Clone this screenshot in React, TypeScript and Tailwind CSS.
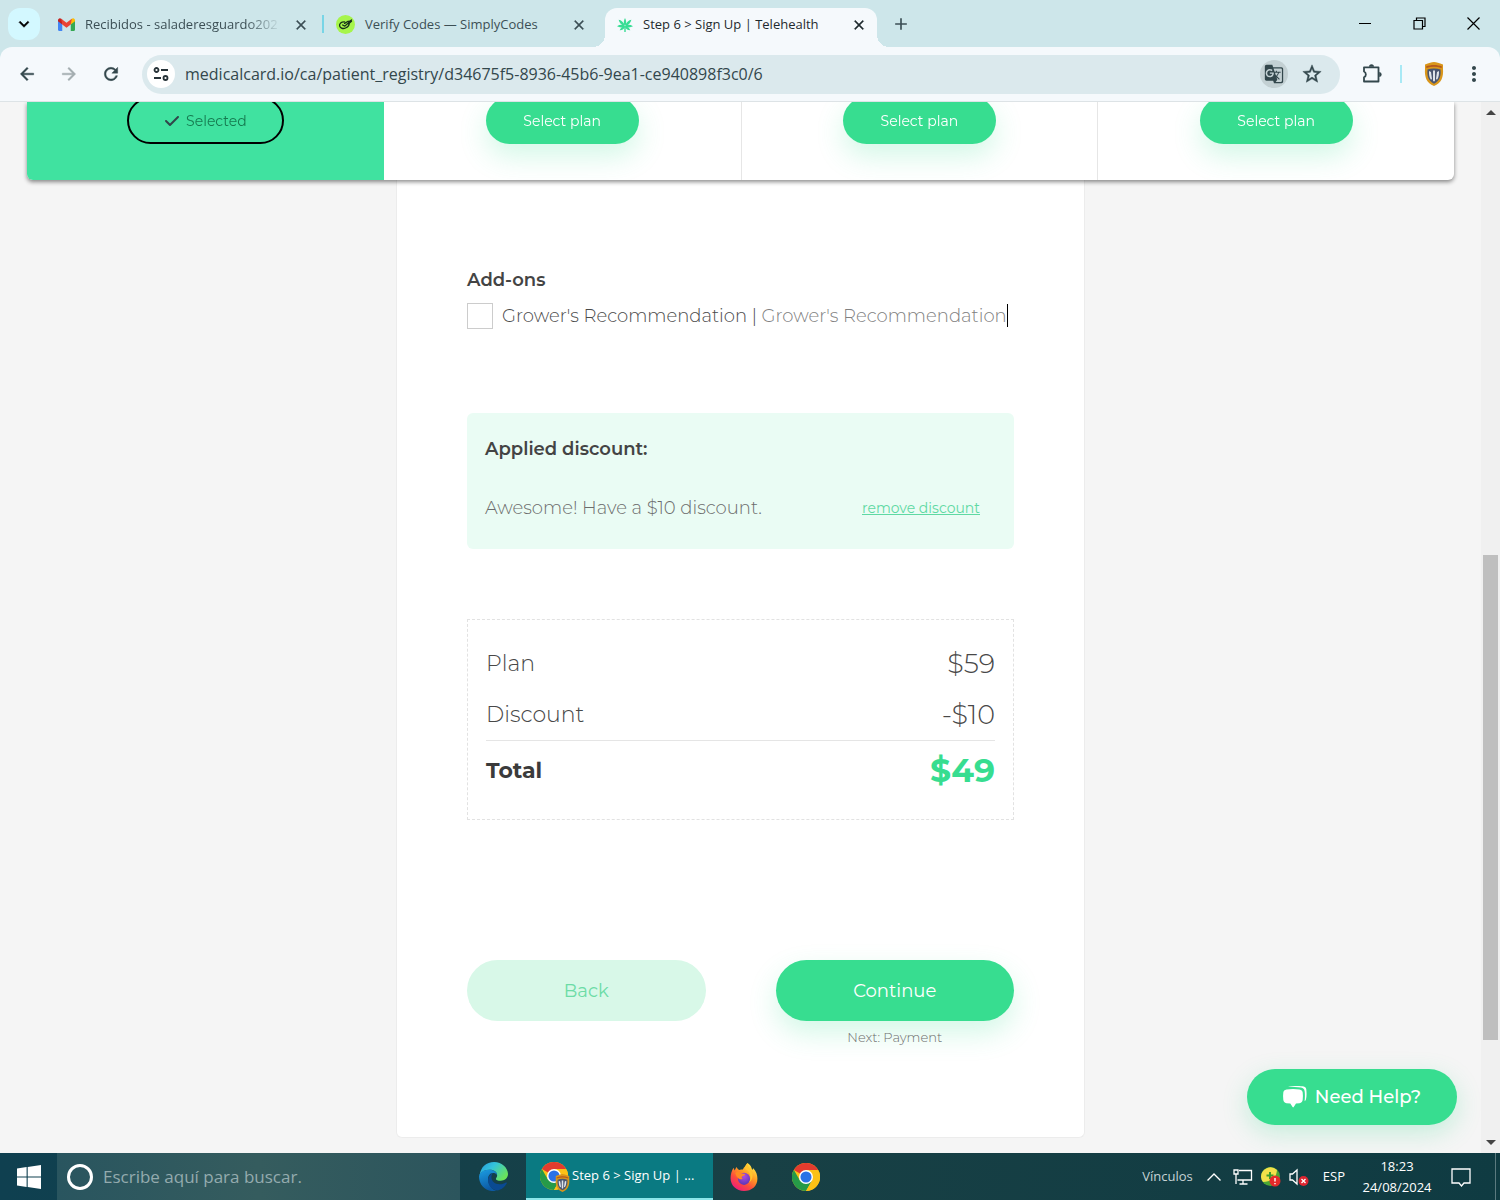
import React from "react";
import { FaCheck } from "react-icons/fa6";
import {
  MdArrowBack,
  MdArrowForward,
  MdClose,
  MdAdd,
  MdGTranslate,
  MdMoreVert,
  MdRefresh,
  MdStarBorder,
  MdKeyboardArrowDown,
} from "react-icons/md";

const GmailIcon = () => (
  <svg className="h-[13px] w-[17px] shrink-0" viewBox="0 0 16 12" aria-hidden="true">
    <path d="M0 2v9a1 1 0 0 0 1 1h3V4z" fill="#4285f4" />
    <path d="M12 4v8h3a1 1 0 0 0 1-1V2z" fill="#34a853" />
    <path d="M0 2a1.8 1.8 0 0 1 3-1.4L4 1.5V6L0 3z" fill="#c5221f" />
    <path d="M16 2a1.8 1.8 0 0 0-3-1.4l-1 .9V6l4-3z" fill="#fbbc04" />
    <path d="M3 .6 8 4.400 13 .6 12 6 8 9 4 6z" fill="#ea4335" />
  </svg>
);

const SimplyCodesIcon = () => (
  <svg className="size-[19px] shrink-0" viewBox="0 0 20 20" aria-hidden="true">
    <circle cx="10" cy="10" r="10" fill="#a6f54b" />
    <g fill="none" stroke="#17301a" strokeWidth="1.4" strokeLinecap="round" strokeLinejoin="round">
      <path d="M9 7.200C5.500 7 3.300 9 3.800 11.500s3.700 3.300 6.200 2.200 4.300-2.900 3.600-5" />
      <path d="M7 10.500l2.300 1.200L16.300 5.200" />
      <path d="M9 8.800l3.300-2 4-.2-3.300 2.800" />
    </g>
  </svg>
);

const LeafIcon = () => (
  <svg className="h-[14px] w-4 shrink-0" viewBox="0 0 16 14" fill="#37dd94" aria-hidden="true">
    <path d="M8 0c1.300 2.200 1.400 4.400.8 7H7.200C6.600 4.400 6.700 2.200 8 0z" />
    <path d="M1.600 1.800C4.300 2.300 6.300 4 7.700 7l-.9.900C4 6.800 2.400 4.800 1.600 1.800zM14.400 1.800C11.700 2.300 9.700 4 8.300 7l.9.900c2.800-1.100 4.400-3.100 5.200-6.100z" />
    <path d="M0 8.300C2.500 6.600 5 6.500 7.800 7.500v1.200C5 9.700 2.500 9.800 0 8.300zM16 8.300c-2.500-1.700-5-1.800-7.800-.8v1.200c2.800 1 5.300 1.100 7.800-.4z" />
    <path d="M2.700 12.200c.9-2.300 2.400-3.500 5-4l.2 1.100c-1.200 2-2.700 3-5.200 2.900zM13.300 12.200c-.9-2.300-2.400-3.500-5-4l-.2 1.100c1.200 2 2.700 3 5.200 2.900z" />
    <path d="M7.300 8h1.400v6H7.300z" />
  </svg>
);

const ExtensionIcon = () => (
  <svg className="size-[22px]" viewBox="0 0 22 22" aria-hidden="true">
    <path
      d="M3 4.300h14.500v14.200H3v-4.200a3.200 3.200 0 0 0 0-5.800z"
      fill="none"
      stroke="currentColor"
      strokeWidth="1.8"
      strokeLinejoin="round"
    />
    <path d="M8 3.700a2.500 2.500 0 0 1 5 0zM18.200 9a2.500 2.500 0 0 1 0 5z" fill="currentColor" />
  </svg>
);

const ShieldIcon = ({ className }: { className: string }) => (
  <svg className={className} viewBox="0 0 20 24" aria-hidden="true">
    <path d="M10 0c2.500.2 5 1.200 9 2.500v4.500c.6 8-1.500 14-9 17C2.500 21 .4 15 1 7V2.500C5 1.200 7.500.2 10 0z" fill="#d9961a" />
    <path d="M2 4.500C7 2.500 13 2.500 18 4.500l-.5 1.500c-5-1.600-10-1.600-15 0z" fill="#b6581d" />
    <path d="M3.500 7.500c4-1.500 9-1.500 13 0 .6 6-.5 11-6.500 14.300C4 18.500 2.900 13.500 3.500 7.500z" fill="#4a5670" />
    <path d="M5 9l2 1 1 7-1 .8C5.300 15.500 4.800 12 5 9zM15 9l-2 1-1 7 1 .8c1.700-2.300 2.200-5.800 2-8.800zM9 8.500h2v10l-1 1.300-1-1.300z" fill="#dfe4ea" />
  </svg>
);

const ChromeIcon = ({ className }: { className: string }) => (
  <svg className={className} viewBox="0 0 48 48" aria-hidden="true">
    <circle cx="24" cy="24" r="24" fill="#fbc116" />
    <path d="M24 24 3.200 12A24 24 0 0 1 44.800 12H24z" fill="#e33b2e" />
    <path d="M3.200 12A24 24 0 0 0 24 48l10.400-18L24 24 13.600 30z" fill="#269a48" />
    <path d="M24 12h20.800A24 24 0 0 1 24 48l10.400-18z" fill="#fbc116" />
    <circle cx="24" cy="24" r="12" fill="#fff" />
    <circle cx="24" cy="24" r="9.500" fill="#2a72e6" />
  </svg>
);

const EdgeIcon = () => (
  <svg className="size-[29px]" viewBox="0 0 48 48" aria-hidden="true">
    <defs>
      <linearGradient id="edgeTop" x1="0" y1="0" x2="1" y2="0.6">
        <stop offset="0" stopColor="#2597dc" />
        <stop offset="0.45" stopColor="#33c3dc" />
        <stop offset="1" stopColor="#6ae35a" />
      </linearGradient>
      <linearGradient id="edgeLow" x1="0" y1="0" x2="0.3" y2="1">
        <stop offset="0" stopColor="#1b9de2" />
        <stop offset="1" stopColor="#0c59a4" />
      </linearGradient>
    </defs>
    <path d="M1 22C3 8 12 0 25 0c13 0 23 10 23 20 0 7-6 11-12 11-5 0-8-1-8-3s2-2 2-6c0-5-5-9-12-9C10 13 4 16 1 22z" fill="url(#edgeTop)" />
    <path d="M0 24c1-7 9-12 18-11 7 .5 12 4 12 9-1-3-4-4-7-4-5 0-8 5-8 10 0 9 6 17 14 20C12 50 0 39 0 24z" fill="url(#edgeLow)" />
    <path d="M23 18c-5 2-8 7-8 12 0 8 6 16 15 17 7-1 13-6 16-12 .5-1-.5-1.500-1.500-1-3 2-6 3-10 3-9 0-14-6-14-12 0-3 1-5 2.500-7z" fill="#0a4a92" />
  </svg>
);

const FirefoxIcon = () => (
  <svg className="size-7" viewBox="0 0 48 48" aria-hidden="true">
    <defs>
      <linearGradient id="foxBody" x1="0.85" y1="0.05" x2="0.25" y2="0.95">
        <stop offset="0" stopColor="#fff04a" />
        <stop offset="0.4" stopColor="#ff9a22" />
        <stop offset="0.7" stopColor="#fb4d3c" />
        <stop offset="1" stopColor="#ee1f78" />
      </linearGradient>
      <radialGradient id="foxGlobe" cx="0.5" cy="0.3" r="0.7">
        <stop offset="0" stopColor="#b04ce0" />
        <stop offset="1" stopColor="#5a36b8" />
      </radialGradient>
    </defs>
    <path d="M30 0c5 3 7 7 8 12l2-3c5 5 7 12 7 18 0 13-10 21-23 21S1 38 1 26C1 19 3 13 6 8l2 5 3-6c1 2 3 4 5 5 2-1 4-1 6-1 2-4 5-6 8-11z" fill="url(#foxBody)" />
    <circle cx="24" cy="27" r="10.5" fill="url(#foxGlobe)" />
    <path d="M9 17c4-3 9-2 11 1l6 1c0 3-6 3-6 6 0 1 1 2 2 2-3 2-7 1-9-2-2-2-3-5-4-8z" fill="#ff8a22" />
    <path d="M26 10c6 3 9 8 9 15 0 4-1 7-3 9 7-4 9-14 4-21-2-3-6-7-6-13-3 3-5 6-4 10z" fill="#ffc52e" />
  </svg>
);

const SiteSettingsIcon = () => (
  <svg className="size-4" viewBox="0 0 16 16" fill="none" stroke="#263238" strokeWidth="1.8" aria-hidden="true">
    <circle cx="3.500" cy="4" r="2" />
    <path d="M8 4h7M1 12h7" />
    <circle cx="12.500" cy="12" r="2" />
  </svg>
);

const WindowsLogo = () => (
  <svg className="size-6" viewBox="0 0 24 24" fill="#fff" aria-hidden="true">
    <path d="M0 3.400 9.600 2v9.400H0zM10.700 1.900 24 0v11.400H10.700zM0 12.500h9.600v9.400L0 20.500zM10.700 12.500H24V24l-13.300-1.900z" />
  </svg>
);

const ChatIcon = () => (
  <svg className="h-[22px] w-6" viewBox="0 0 24 22" fill="#fff" aria-hidden="true">
    <path d="M5 1.100C10-.2 17-.2 20.800.6c1.500.4 2.300 1.300 2.500 3 .4 3.500.4 7-.3 9.700-.3 1-.7 1.500-1.400 1.900.4-3.500.4-6.600.1-9.600-.3-2.500-1.500-3.700-3.700-4C14.500 1.200 9 1.100 5 1.100z" />
    <path d="M3.500 3.500c4-.7 9-.7 13 0 2 .4 3 1.300 3.200 3.100.3 2.500.3 4.700 0 7.200-.2 2-1.200 3-3.200 3.400l-3.500.4-2.300 3.500a.7.7 0 0 1-1.100 0L7.300 17.600l-3.800-.4c-2-.4-3-1.400-3.200-3.400-.3-2.500-.3-4.700 0-7.200.2-1.800 1.200-2.700 3.200-3.100z" />
  </svg>
);

function Tab({ icon, title, width, active, fade }: { icon: React.ReactNode; title: string; width: string; active?: boolean; fade?: boolean }) {
  return (
    <div
      className={`relative flex h-[39px] min-w-0 items-center gap-2.5 self-end pr-2 pb-1.5 pl-3 ${width} ${
        active ? "rounded-t-xl bg-[#f5f9fc] text-[#1f2a2e]" : "text-[#3c4f55]"
      }`}
    >
      {active && (
        <>
          <span className="absolute bottom-0 -left-3 size-3 bg-[radial-gradient(circle_at_top_left,transparent_12px,#f5f9fc_12px)]" />
          <span className="absolute -right-3 bottom-0 size-3 bg-[radial-gradient(circle_at_top_right,transparent_12px,#f5f9fc_12px)]" />
        </>
      )}
      {icon}
      <span
        className={`min-w-0 flex-1 text-[13px] whitespace-nowrap ${
          fade ? "[mask-image:linear-gradient(to_right,#000_82%,transparent)]" : ""
        }`}
      >
        {title}
      </span>
      <button aria-label={`Close ${title}`} className="flex size-5 shrink-0 items-center justify-center">
        <MdClose className="size-4 [&>path:last-child]:stroke-[0.6]" />
      </button>
    </div>
  );
}

function Browser() {
  return (
    <header className="shrink-0 bg-[#cde6ea] font-['Open_Sans','Noto_Sans',sans-serif]">
      <div className="flex h-[47px] items-center">
        <button aria-label="Search tabs" className="ml-2 flex size-8 shrink-0 items-center justify-center rounded-xl bg-[#d3f8ff]">
          <MdKeyboardArrowDown className="size-5 [&>path:last-child]:stroke-[0.6]" />
        </button>
        <Tab icon={<GmailIcon />} title="Recibidos - saladeresguardo202" width="ml-1.5 w-[273px]" fade />
        <span className="ml-[3px] h-[18px] w-0.5 shrink-0 bg-[#78d5e6]" />
        <Tab icon={<SimplyCodesIcon />} title="Verify Codes — SimplyCodes" width="w-[273px]" />
        <span className="w-2 shrink-0" />
        <Tab icon={<LeafIcon />} title="Step 6 > Sign Up | Telehealth" width="w-[272px]" active />
        <button aria-label="New tab" className="ml-3 flex size-6 items-center justify-center text-[#3c4f55]">
          <MdAdd className="size-5" />
        </button>
        <div className="ml-auto flex shrink-0 items-center">
          <button aria-label="Minimize" className="flex h-10 w-[54px] items-center justify-center">
            <span className="h-px w-3 bg-black" />
          </button>
          <button aria-label="Restore" className="flex h-10 w-[54px] items-center justify-center">
            <svg className="size-[13px]" viewBox="0 0 13 13" fill="none" stroke="#000" strokeWidth="1.2" aria-hidden="true">
              <path d="M1 3.500h8.500V12H1zM3.500 3.500V1H12v8.500H9.500" />
            </svg>
          </button>
          <button aria-label="Close window" className="flex h-10 w-[54px] items-center justify-center">
            <svg className="size-[13px]" viewBox="0 0 13 13" stroke="#000" strokeWidth="1.2" aria-hidden="true">
              <path d="M.5.500l12 12M12.500.500l-12 12" />
            </svg>
          </button>
        </div>
      </div>
      <div className="flex h-[55px] items-center rounded-t-xl border-b border-[#dde3e6] bg-[#f5f9fc] pr-3.5 text-[#33474c]">
        <button aria-label="Back" className="ml-4 flex size-[22px] items-center justify-center">
          <MdArrowBack className="size-5 [&>path:last-child]:stroke-[0.5]" />
        </button>
        <button aria-label="Forward" className="ml-5 flex size-[22px] items-center justify-center text-[#a3adb0]">
          <MdArrowForward className="size-5 [&>path:last-child]:stroke-[0.5]" />
        </button>
        <button aria-label="Reload" className="ml-5 flex size-[22px] items-center justify-center">
          <MdRefresh className="size-5 [&>path:last-child]:stroke-[0.5]" />
        </button>
        <div className="ml-5 flex h-[39px] min-w-0 flex-1 items-center rounded-full bg-[#dbe9ed] pr-4 pl-[5px]">
          <button aria-label="Site information" className="flex size-7 shrink-0 items-center justify-center rounded-full bg-white">
            <SiteSettingsIcon />
          </button>
          <input
            aria-label="Address"
            className="ml-2.5 min-w-0 flex-1 bg-transparent text-base outline-none"
            defaultValue="medicalcard.io/ca/patient_registry/d34675f5-8936-45b6-9ea1-ce940898f3c0/6"
          />
          <button aria-label="Translate" className="flex size-7 items-center justify-center rounded-full bg-[#c3d0d3]">
            <MdGTranslate className="size-5" />
          </button>
          <button aria-label="Bookmark" className="ml-3 flex size-6 items-center justify-center">
            <MdStarBorder className="size-[22px] [&>path:last-child]:stroke-[0.5]" />
          </button>
        </div>
        <button aria-label="Extensions" className="ml-5 flex size-6 items-center justify-center">
          <ExtensionIcon />
        </button>
        <span className="ml-4 h-[18px] w-0.5 bg-[#a8e9f5]" />
        <button aria-label="Profile" className="ml-5 flex size-6 items-center justify-center">
          <ShieldIcon className="h-6 w-5" />
        </button>
        <button aria-label="Menu" className="ml-4 flex size-6 items-center justify-center">
          <MdMoreVert className="size-6" />
        </button>
      </div>
    </header>
  );
}

function Plans() {
  return (
    <section className="mx-[27px] grid grid-cols-4 overflow-hidden rounded-b-md bg-white">
      <div className="-mt-[5px] flex justify-center bg-[#40e2a0] pb-9">
        <button className="flex h-[47px] w-[157px] items-center justify-center gap-1.5 rounded-full border-2 border-black text-sm text-[#167a50]">
          <FaCheck className="size-4 text-[#30464a]" />
          Selected
        </button>
      </div>
      {[1, 2, 3].map((n) => (
        <div key={n} className={`-mt-[5px] flex justify-center pb-9 ${n > 1 ? "border-l border-[#e6e6e6]" : ""}`}>
          <button className="h-[47px] w-[153px] rounded-full bg-[#37dd90] text-sm text-white shadow-[0_12px_28px_rgba(55,221,144,0.22)]">
            Select plan
          </button>
        </div>
      ))}
    </section>
  );
}

function Checkout() {
  return (
    <section className="mx-auto w-full max-w-[689px] rounded-b-md border-x border-b border-[#ececec] bg-white px-[70px] pb-[90px]">
      <h2 className="pt-[86px] text-lg leading-7 font-semibold text-[#444]">Add-ons</h2>
      <div className="mt-2 flex h-[27px] items-center text-lg font-light whitespace-nowrap text-[#4a4a4a]">
        <input id="grower" type="checkbox" className="mr-[9px] size-[26px] shrink-0 appearance-none border border-[#ccc] bg-white" />
        <label htmlFor="grower">
          Grower's Recommendation | <span className="text-[#808080]">Grower's Recommendation</span>
        </label>
        <span className="h-[23px] w-px bg-black" />
      </div>

      <div className="mt-[84px] h-[136px] rounded-md bg-[#eafcf4] px-[18px] pt-[22px]">
        <h2 className="text-lg leading-7 font-semibold text-[#444]">Applied discount:</h2>
        <div className="mt-[31px] flex items-center justify-between pr-4">
          <p className="text-lg leading-7 font-light text-[#6c6c6c]">Awesome! Have a $10 discount.</p>
          <a href="#remove" className="text-sm text-[#5fd9a3] underline underline-offset-1">remove discount</a>
        </div>
      </div>

      <dl className="mt-[70px] border border-dashed border-[#e2e2e2] px-[18px] pt-[18px] pb-[19px] text-[#484848]">
        <div className="flex h-[51px] items-center justify-between">
          <dt className="text-[22px] font-light">Plan</dt>
          <dd className="text-[27px] leading-9 font-light">$59</dd>
        </div>
        <div className="flex h-[52px] items-center justify-between border-b border-[#e5e5e5]">
          <dt className="text-[22px] font-light">Discount</dt>
          <dd className="text-[27px] leading-9 font-light">-$10</dd>
        </div>
        <div className="flex h-[59px] items-center justify-between">
          <dt className="text-[22px] font-bold text-[#3b3b3b]">Total</dt>
          <dd className="text-[33px] font-bold text-[#37dd90]">$49</dd>
        </div>
      </dl>

      <div className="mt-[140px] grid grid-cols-2 gap-[70px] text-center">
        <button className="h-[61px] self-start rounded-full bg-[#d8f8e8] text-lg text-[#6cdca6]">Back</button>
        <div>
          <button className="h-[61px] w-full rounded-full bg-[#37dd90] text-lg text-white shadow-[0_12px_28px_rgba(55,221,144,0.22)]">
            Continue
          </button>
          <p className="mt-1.5 text-[13px] leading-5 font-light text-[#6c6c6c]">Next: Payment</p>
        </div>
      </div>
    </section>
  );
}

function ScrollBar() {
  return (
    <div className="flex w-[19px] shrink-0 flex-col items-center justify-between bg-[#f0f0f0] py-2" aria-hidden="true">
      <span className="border-x-[5px] border-b-[5px] border-x-transparent border-b-[#444]" />
      <span className="mt-[340px] h-[485px] w-[15px] bg-[#bfbfbf]" />
      <span className="border-x-[5px] border-t-[5px] border-x-transparent border-t-[#444]" />
    </div>
  );
}

function Taskbar() {
  return (
    <footer className="flex h-[47px] shrink-0 items-center bg-linear-to-r from-[#0f4050] via-[#184045] to-[#0f3b42] font-['Open_Sans','Noto_Sans',sans-serif] text-[13px] text-white">
      <button aria-label="Start" className="flex h-full w-[57px] items-center justify-center">
        <WindowsLogo />
      </button>
      <label className="flex h-full w-[403px] items-center bg-linear-to-r from-[#29555f] via-[#355c5e] to-[#2c555d] pl-2.5">
        <span className="size-[26px] rounded-full border-[3px] border-white" />
        <input
          aria-label="Buscar"
          placeholder="Escribe aquí para buscar."
          className="ml-2.5 min-w-0 flex-1 bg-transparent text-[17px] outline-none placeholder:text-[#94abae]"
        />
      </label>
      <button aria-label="Edge" className="flex h-full w-[66px] items-center justify-center">
        <EdgeIcon />
      </button>
      <button className="flex h-full w-[187px] items-center gap-1 border-b-2 border-[#8be6ea] bg-[#0a7a82] pl-3.5 whitespace-nowrap">
        <span className="relative">
          <ChromeIcon className="size-7" />
          <ShieldIcon className="absolute -right-0.5 -bottom-0.5 h-[18px] w-[15px]" />
        </span>
        Step 6 &gt; Sign Up | ...
      </button>
      <button aria-label="Firefox" className="flex h-full w-[62px] items-center justify-center">
        <FirefoxIcon />
      </button>
      <button aria-label="Chrome" className="flex h-full w-[62px] items-center justify-center">
        <ChromeIcon className="size-7" />
      </button>
      <div className="ml-auto flex h-full items-center">
        <span className="text-[#c5d3d5]">Vínculos</span>
        <svg className="ml-3.5 h-2 w-3.5" viewBox="0 0 14 8" fill="none" stroke="#fff" strokeWidth="1.4" aria-hidden="true">
          <path d="M.5 7.500 7 1l6.500 6.500" />
        </svg>
        <svg className="ml-3 h-4 w-5" viewBox="0 0 20 16" fill="none" stroke="#fff" strokeWidth="1.3" aria-hidden="true">
          <path d="M6 1.500h12.500v9.500H4.500M10 11v4M6.500 15h8M1 1h4v4H1zM3 5v10" />
        </svg>
        <svg className="ml-2 size-5" viewBox="0 0 20 20" aria-hidden="true">
          <circle cx="9.500" cy="9.500" r="9.500" fill="#4ca733" />
          <path d="M0 10a9.500 9.500 0 0 1 16-7C15 13 10 14 2 15A9 9 0 0 1 0 10z" fill="#f3e04a" />
          <path d="M9 5v7M5.500 8.500h7" stroke="#3f9b2d" strokeWidth="2" />
          <circle cx="14" cy="14" r="5.500" fill="#e52a2a" />
          <path d="M14 11v3.500M14 16v1.300" stroke="#fff" strokeWidth="1.4" />
        </svg>
        <svg className="ml-2 h-5 w-5" viewBox="0 0 20 20" fill="none" aria-hidden="true">
          <path d="M1 7h2.500L8 3v14l-4.500-4H1z" stroke="#fff" strokeWidth="1.3" />
          <circle cx="14.500" cy="14" r="5" fill="#dd2530" />
          <path d="M12.500 12l4 4M16.500 12l-4 4" stroke="#fff" strokeWidth="1.3" />
        </svg>
        <span className="ml-3.5">ESP</span>
        <time className="ml-4 w-[72px] text-center leading-[21px]">18:23 24/08/2024</time>
        <button aria-label="Notifications" className="ml-[18px]">
          <svg className="h-5 w-5" viewBox="0 0 20 20" fill="none" stroke="#fff" strokeWidth="1.3" aria-hidden="true">
            <path d="M1 2h18v14h-6l-2.500 3L8 16H1z" />
          </svg>
        </button>
        <span className="mr-1 ml-6 h-full w-px bg-[#5b7a7f]" />
      </div>
    </footer>
  );
}

export default function App() {
  return (
    <div className="flex h-screen flex-col overflow-hidden font-['Montserrat','Inter',sans-serif]">
      <Browser />
      <div className="relative flex min-h-0 flex-1 bg-[#f5f5f5]">
        <main className="min-w-0 flex-1 overflow-hidden">
          <div className="relative rounded-b-md drop-shadow-[0_2px_2px_rgba(0,0,0,0.45)]">
            <Plans />
          </div>
          <Checkout />
        </main>
        <ScrollBar />
        <button className="absolute right-[43px] bottom-7 flex h-14 w-[210px] items-center justify-center gap-2 rounded-full bg-[#37dd90] text-lg font-medium text-white shadow-[0_8px_24px_rgba(55,221,144,0.25)]">
          <ChatIcon />
          Need Help?
        </button>
      </div>
      <Taskbar />
    </div>
  );
}
